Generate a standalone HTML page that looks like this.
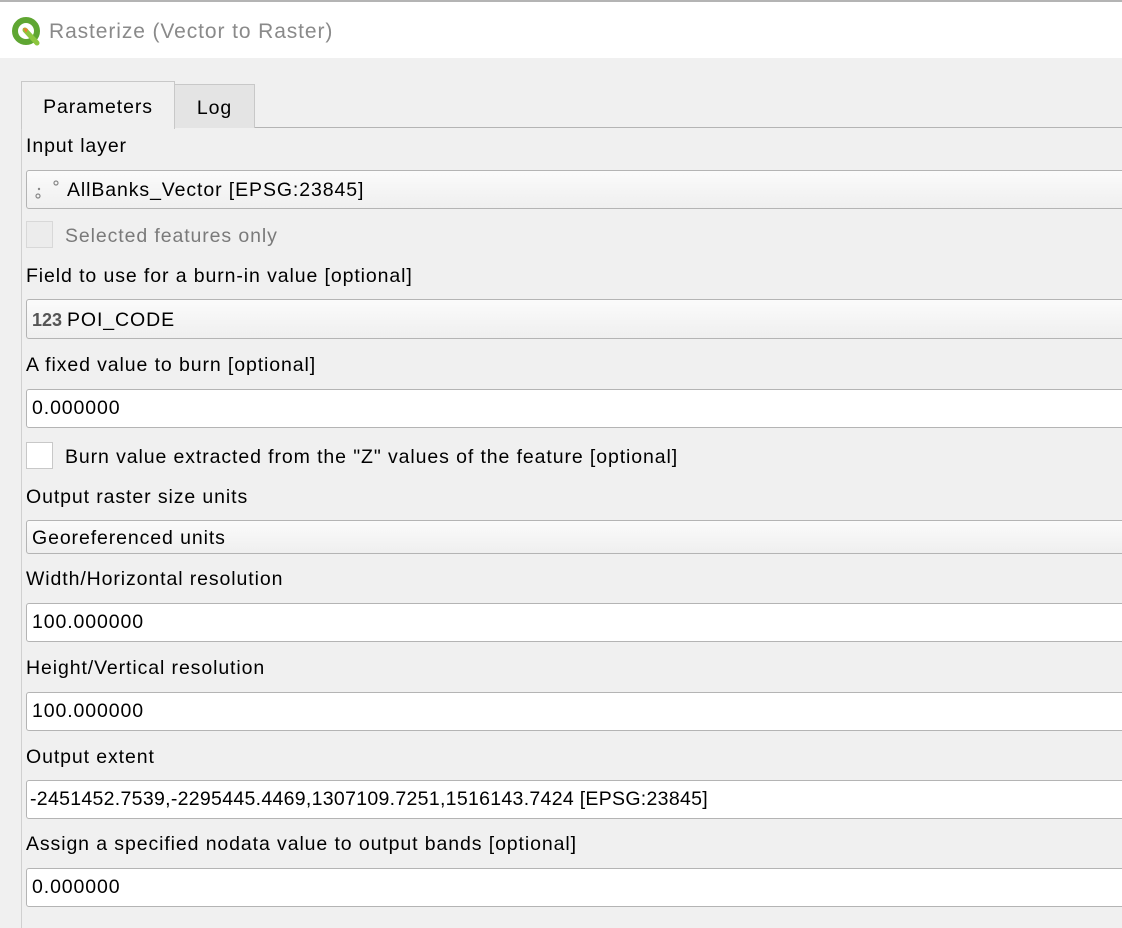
<!DOCTYPE html>
<html><head><meta charset="utf-8"><style>
html,body{margin:0;padding:0}
body{width:1122px;height:922px;overflow:hidden;background:#f0f0f0;position:relative;font-family:"Liberation Sans",sans-serif;font-size:19.5px;letter-spacing:0.9px;color:#000}
.a{position:absolute}
.title{left:0;top:0;width:1122px;height:58px;background:#fff;border-top:2px solid #b4b4b4;box-sizing:border-box}
.lbl{position:absolute;left:26px;white-space:nowrap;line-height:24px}
.inp{position:absolute;left:26px;width:1110px;background:#fff;border:1px solid #b4b4b4;border-radius:3px;box-sizing:border-box;line-height:36px;padding-left:5px;white-space:nowrap}
.cmb{position:absolute;left:26px;width:1110px;background:linear-gradient(#fbfbfb,#efefef);border:1px solid #b4b4b4;border-radius:3px;box-sizing:border-box;padding-left:5px;white-space:nowrap}
.cb{position:absolute;left:26px;width:27px;height:27px;background:#fff;border:1px solid #c8c8c8;box-sizing:border-box}
</style></head><body>
<div class="a title"></div>
<svg class="a" style="left:11px;top:16px" width="32" height="32" viewBox="0 0 32 32">
<circle cx="15" cy="15" r="11" fill="none" stroke="#5fa632" stroke-width="6"/>
<path d="M14 14 L26 27" stroke="#8cc63e" stroke-width="5" stroke-linecap="round"/>
<path d="M12 12 L17 13 L15 17 Z" fill="#ee7d30"/>
</svg>
<div class="a" style="left:49px;top:20px;font-size:21px;color:#8a8a8a;white-space:nowrap">Rasterize (Vector to Raster)</div>

<div class="a" style="left:21px;top:127px;width:1110px;height:800px;border-left:1px solid #d0d0d0;border-top:1px solid #b4b4b4;background:#f0f0f0"></div>
<div class="a" style="left:21px;top:81px;width:154px;height:48px;background:#f0f0f0;border:1px solid #c8c8c8;border-bottom:none;box-sizing:border-box;text-align:center;line-height:50px">Parameters</div>
<div class="a" style="left:175px;top:84px;width:80px;height:44px;background:#e4e4e4;border:1px solid #c8c8c8;border-left:none;border-bottom:none;box-sizing:border-box;text-align:center;line-height:46px">Log</div>

<div class="lbl" style="top:134px">Input layer</div>
<div class="cmb" style="top:170px;height:39px;line-height:38px;padding-left:40px">AllBanks_Vector [EPSG:23845]</div>
<svg class="a" style="left:33px;top:178px" width="30" height="24"><circle cx="5" cy="18" r="2" fill="none" stroke="#888" stroke-width="1.2"/><circle cx="6" cy="11" r="1.2" fill="#888"/><circle cx="23" cy="5" r="2" fill="none" stroke="#888" stroke-width="1.2"/></svg>
<div class="cb" style="top:221px;background:#ececec;border-color:#d8d8d8"></div>
<div class="lbl" style="left:65px;top:224px;color:#7a7a7a">Selected features only</div>
<div class="lbl" style="top:264px">Field to use for a burn-in value [optional]</div>
<div class="cmb" style="top:299px;height:40px;line-height:40px"><span style="display:inline-block;width:35px;font-weight:bold;color:#555;font-size:18px;letter-spacing:0">123</span>POI_CODE</div>
<div class="lbl" style="top:353px">A fixed value to burn [optional]</div>
<div class="inp" style="top:389px;height:39px">0.000000</div>
<div class="cb" style="top:442px"></div>
<div class="lbl" style="left:65px;top:445px">Burn value extracted from the "Z" values of the feature [optional]</div>
<div class="lbl" style="top:485px">Output raster size units</div>
<div class="cmb" style="top:520px;height:34px;line-height:34px">Georeferenced units</div>
<div class="lbl" style="top:567px">Width/Horizontal resolution</div>
<div class="inp" style="top:603px;height:39px">100.000000</div>
<div class="lbl" style="top:656px">Height/Vertical resolution</div>
<div class="inp" style="top:692px;height:39px">100.000000</div>
<div class="lbl" style="top:745px">Output extent</div>
<div class="inp" style="top:780px;height:39px;padding-left:3px;letter-spacing:0.3px">-2451452.7539,-2295445.4469,1307109.7251,1516143.7424 [EPSG:23845]</div>
<div class="lbl" style="top:832px">Assign a specified nodata value to output bands [optional]</div>
<div class="inp" style="top:868px;height:39px">0.000000</div>
</body></html>
